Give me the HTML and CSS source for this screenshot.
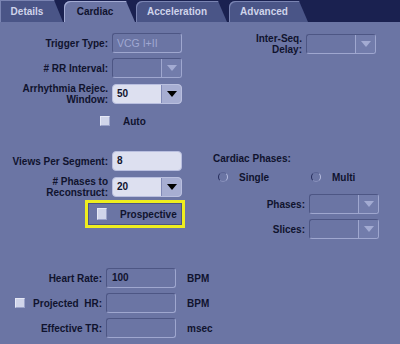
FILE: index.html
```html
<!DOCTYPE html>
<html lang="en">
<head>
  <meta charset="UTF-8">
  <meta name="viewport" content="width=device-width, initial-scale=1.0">
  <title>Cardiac</title>
  <link rel="stylesheet" href="styles.css">
</head>
<body>
  <div class="tabs">
    <div class="tab t-details">Details</div>
    <div class="tab t-cardiac active">Cardiac</div>
    <div class="tab t-accel">Acceleration</div>
    <div class="tab t-adv">Advanced</div>
  </div>

  <div class="panel">
    <!-- trigger / arrhythmia -->
    <div class="section s-top">
      <div class="col col-left">
        <div class="row">
          <span class="lbl">Trigger Type:</span>
          <div class="field off"><span class="val dim">VCG I+II</span></div>
        </div>
        <div class="row">
          <span class="lbl"># RR Interval:</span>
          <div class="field off"><span class="val"></span><span class="btn"><i class="tri"></i></span></div>
        </div>
        <div class="row">
          <span class="lbl">Arrhythmia Rejec.<br>Window:</span>
          <div class="field on"><span class="val">50</span><span class="btn"><i class="tri"></i></span></div>
        </div>
        <div class="check-row auto">
          <span class="box"></span><span>Auto</span>
        </div>
      </div>
      <div class="col col-right">
        <div class="row">
          <span class="lbl lbl-seq">Inter-Seq.<br>Delay:</span>
          <div class="field off"><span class="val"></span><span class="btn"><i class="tri"></i></span></div>
        </div>
      </div>
    </div>

    <!-- segments / phases -->
    <div class="section s-mid">
      <div class="col col-left">
        <div class="row">
          <span class="lbl">Views Per Segment:</span>
          <div class="field on"><span class="val">8</span></div>
        </div>
        <div class="row">
          <span class="lbl"># Phases to<br>Reconstruct:</span>
          <div class="field on"><span class="val">20</span><span class="btn"><i class="tri"></i></span></div>
        </div>
        <div class="prospective">
          <span class="box"></span><span>Prospective</span>
        </div>
      </div>
      <div class="col col-phases">
        <div class="heading">Cardiac Phases:</div>
        <div class="radios">
          <div class="radio r-single"><span class="dot"></span><span>Single</span></div>
          <div class="radio"><span class="dot"></span><span>Multi</span></div>
        </div>
        <div class="row r-phases">
          <span class="lbl lbl-ph">Phases:</span>
          <div class="field off"><span class="val"></span><span class="btn"><i class="tri"></i></span></div>
        </div>
        <div class="row r-slices">
          <span class="lbl lbl-ph">Slices:</span>
          <div class="field off"><span class="val"></span><span class="btn"><i class="tri"></i></span></div>
        </div>
      </div>
    </div>

    <!-- heart rate -->
    <div class="section s-bottom">
      <div class="row">
        <span class="lbl lbl-hr">Heart Rate:</span>
        <div class="field off"><span class="val">100</span></div>
        <span class="unit">BPM</span>
      </div>
      <div class="row">
        <span class="lbl lbl-hr lbl-proj"><span class="box"></span><span>Projected&nbsp; HR:</span></span>
        <div class="field off"><span class="val"></span></div>
        <span class="unit">BPM</span>
      </div>
      <div class="row">
        <span class="lbl lbl-hr">Effective TR:</span>
        <div class="field off"><span class="val"></span></div>
        <span class="unit">msec</span>
      </div>
    </div>
  </div>
</body>
</html>
```

FILE: styles.css
```css
body { margin: 0; width: 400px; height: 344px; overflow: hidden; background: #6b75a4; color: #10132e;
  font-family: "Liberation Sans", Arial, sans-serif; font-size: 10px; font-weight: bold; }

.tabs { display: flex; gap: 1px; height: 22px; background: #1a2150; }
.tab { display: flex; align-items: center; justify-content: center; box-sizing: border-box; padding-right: 9px; margin-top: 1px;
  background: #4a5587; color: #cfd3ea; border-top-left-radius: 6px; box-shadow: inset 1px 1px 0 #7a84b2;
  clip-path: polygon(0 0, calc(100% - 9px) 0, 100% 100%, 0 100%); }
.tab.active { background: #6b75a4; color: #10132e; box-shadow: inset 1px 1px 0 #a3abd3; }
.t-details { width: 63px; margin-top: 0; border-top-left-radius: 0; }
.t-cardiac { width: 71px; }
.t-accel { width: 91px; }
.t-adv { width: 79px; margin-left: 1px; }

.panel { padding-top: 11px; }
.section { display: flex; }
.col { display: flex; flex-direction: column; }
.col-left { width: 200px; gap: 5px; }
.row { display: flex; align-items: center; gap: 4px; }
.lbl { width: 108px; text-align: right; line-height: 11px; }
.lbl-seq { width: 102px; }

.field { display: flex; width: 70px; height: 20px; box-sizing: border-box; border: 1px solid; border-radius: 3px; }
.field.off { border-color: #4d5684 #9fa7cf #9fa7cf #4d5684; }
.field.on { background: #dde0f0; border-color: #b9bfdf; border-radius: 4px; }
.val { flex: 1; padding-left: 4px; line-height: 18px; }
.val.dim { color: #a0a8d2; font-weight: normal; font-size: 10.5px; }
.btn { width: 19px; display: flex; align-items: center; justify-content: center; }
.off .btn { background: #727cab; border-left: 1px solid #9fa7cf; border-radius: 0 2px 2px 0; }
.on .btn { background: #a7aed2; border-left: 1px solid #8089b6; border-radius: 0 3px 3px 0; }
.tri { width: 0; height: 0; border-left: 5px solid transparent; border-right: 5px solid transparent; border-top: 6px solid #000; }
.off .tri { border-top-color: #a3abd2; }

.box { width: 10px; height: 10px; box-sizing: border-box; background: #d0d5ea; border: 1px solid;
  border-color: #e6e9f6 #9aa2c9 #9aa2c9 #e6e9f6; flex: none; }
.check-row { display: flex; align-items: center; height: 12px; }
.auto { margin-top: 5px; padding-left: 100px; gap: 13px; }

.s-mid { margin-top: 24px; }
.prospective { display: flex; align-items: center; gap: 13px; margin: -3px 0 0 85px; width: 100px; height: 28px;
  box-sizing: border-box; padding-left: 9px; border: 3px solid #eeee1e; box-shadow: inset 0 0 0 1px #4b5483; }
.prospective .box { height: 12px; }

.col-phases { padding: 2px 0 0 13px; }
.heading { line-height: 12px; }
.radios { display: flex; align-items: center; height: 12px; margin-top: 6px; padding-left: 5px; }
.radio { display: flex; align-items: center; gap: 11px; }
.r-single { width: 93px; }
.dot { width: 10px; height: 10px; box-sizing: border-box; border-radius: 50%; border: 1px solid;
  border-color: #5a6494 #b7bee0 #8890bb #252c5a; }
.r-phases { margin-top: 11px; }
.r-slices { margin-top: 5px; }
.lbl-ph { width: 92px; }

.s-bottom { margin-top: 29px; flex-direction: column; gap: 5px; }
.lbl-hr { width: 102px; }
.lbl-proj { display: flex; align-items: center; justify-content: space-between; box-sizing: border-box; padding-left: 15px; }
.s-bottom .val { padding-left: 5px; }
.unit { margin-left: 7px; }
```
